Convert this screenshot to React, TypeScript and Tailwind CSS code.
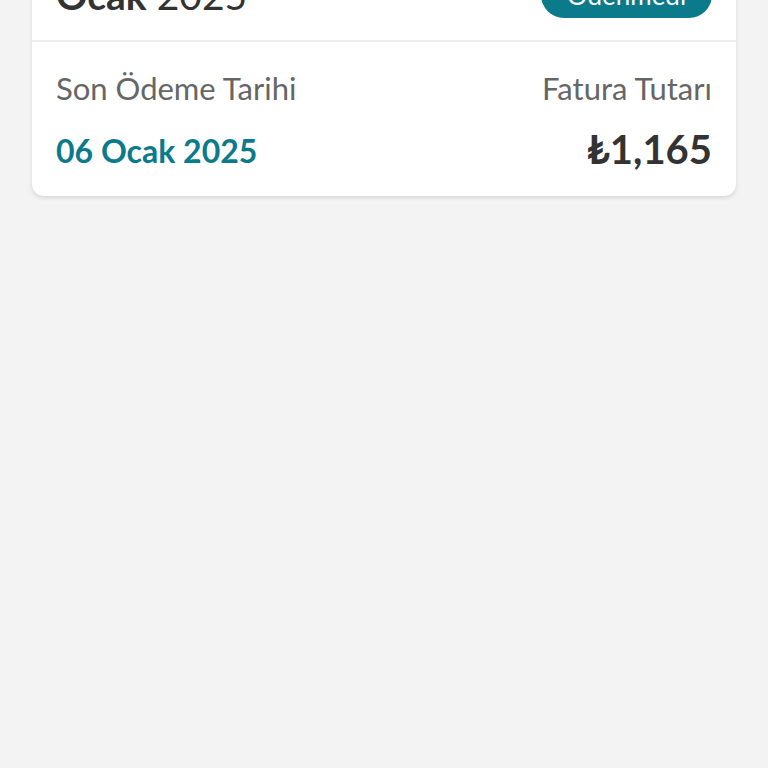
export default function App() {
  return (
    <div className="h-screen w-full overflow-hidden bg-[#f3f3f3] px-8" style={{ fontFamily: "Lato, 'Open Sans', sans-serif" }}>
      <div className="-mt-[50px] rounded-xl bg-white shadow-[0_2px_4px_rgba(0,0,0,0.12)]">
        <div className="flex items-center justify-between px-6 py-[22px]">
          <div className="text-[39px] leading-none text-[#333]">
            <span className="font-bold">Ocak</span> 2025
          </div>
          <div className="flex h-[46px] w-[171px] items-center justify-center rounded-full bg-[#0b7a8b] text-[26px] text-white">
            Ödenmedi
          </div>
        </div>
        <div className="h-[2px] bg-[#ececec]" />
        <div className="flex items-start justify-between px-6 pt-[28px] pb-[26px]">
          <div className="flex flex-col gap-[26px]">
            <span className="text-[31px] leading-[36px] text-[#666]">Son Ödeme Tarihi</span>
            <span className="text-[32px] font-bold leading-[38px] text-[#0b7a8b]">06 Ocak 2025</span>
          </div>
          <div className="flex flex-col items-end gap-[22px]">
            <span className="text-[31px] leading-[36px] text-[#666]">Fatura Tutarı</span>
            <span className="text-[40px] font-bold leading-[42px] text-[#333]">₺1,165</span>
          </div>
        </div>
      </div>
    </div>
  );
}
